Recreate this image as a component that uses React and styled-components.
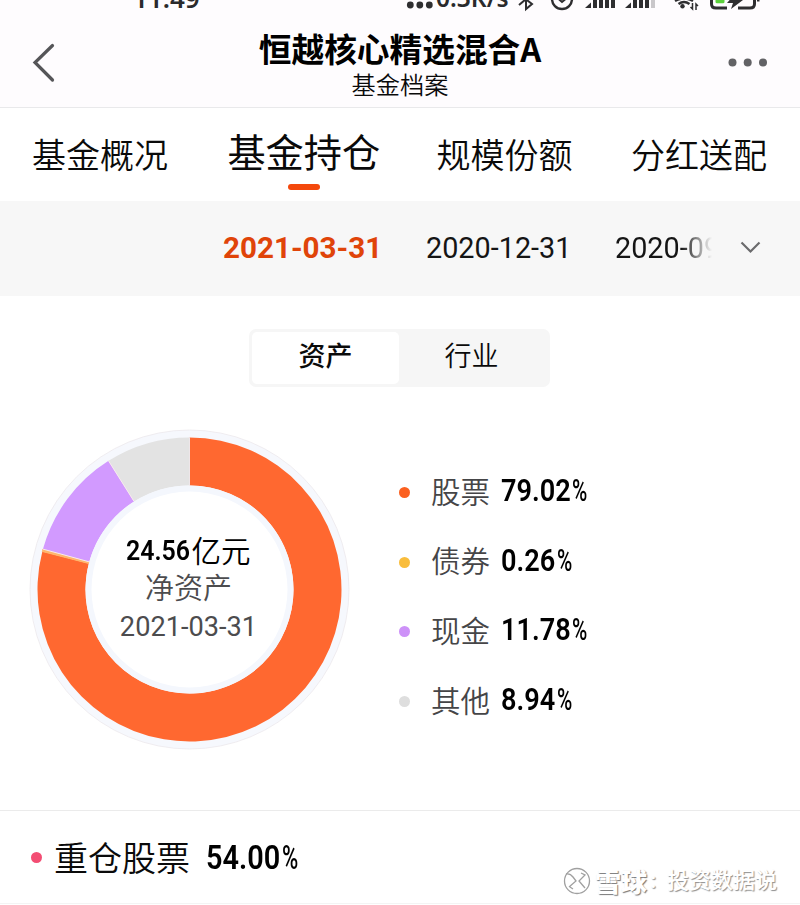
import React from "react";
import styled, { createGlobalStyle } from "styled-components";

const Global = createGlobalStyle`
  * { box-sizing: border-box; }
  body { margin: 0; background: #fff; overflow: hidden; }
`;

const Page = styled.main`
  position: relative;
  width: 800px;
  height: 905px;
  overflow: hidden;
  display: flex;
  flex-direction: column;
  background: #fff;
  color: #0a0a0a;
  font-family: Roboto, "Noto Sans CJK SC", sans-serif;
`;

const StatusBar = styled.div`
  height: 20px;
  flex: none;
  display: flex;
  overflow: hidden;
  background: #fefcfe;
  color: #2a2a2c;
`;
const StatusText = styled.span`
  display: block;
  flex: none;
  height: 30px;
  width: ${(p) => p.$width}px;
  margin-left: ${(p) => p.$left}px;
  margin-top: -17px;
  font: 600 ${(p) => p.$size}px/30px "Noto Sans", sans-serif;
  white-space: nowrap;
`;
const StatusDots = styled.svg`
  flex: none;
  width: 36px;
  height: 20px;
`;
const StatusIcons = styled.svg`
  flex: none;
  width: 250px;
  height: 20px;
`;

const Header = styled.header`
  height: 88px;
  flex: none;
  display: grid;
  grid-template-columns: 100px 1fr 100px;
  background: #fefcfe;
  border-bottom: 1px solid #e9e9eb;
`;
const HeaderIcon = styled.svg`
  width: 100px;
  height: 87px;
`;
const Titles = styled.div`
  display: flex;
  flex-direction: column;
  align-items: center;
  padding-top: 8px;
`;
const Title = styled.h1`
  margin: 0;
  font: 700 32.7px/40px "Noto Sans CJK SC", sans-serif;
  color: #000;
`;
const Subtitle = styled.div`
  font-size: 24.2px;
  line-height: 37px;
  font-weight: 350;
`;

const Tabs = styled.nav`
  height: 93px;
  flex: none;
  display: flex;
  justify-content: space-between;
  padding: 0 33px 0 32px;
`;
const Tab = styled.div`
  display: flex;
  flex-direction: column;
  align-items: center;
  font-size: ${(p) => (p.$active ? 38.2 : 34)}px;
  line-height: 56px;
  padding-top: ${(p) => (p.$active ? 18 : 20)}px;
  margin-right: ${(p) => (p.$active ? -2 : 0)}px;
  padding-left: ${(p) => (p.$active ? 1 : 0)}px;
  font-weight: ${(p) => (p.$active ? 400 : 350)};
  &::after {
    content: "";
    width: 32px;
    height: 6px;
    margin-top: 2px;
    border-radius: 3px;
    background: ${(p) => (p.$active ? "#f4480c" : "transparent")};
  }
`;

const DateBar = styled.div`
  height: 95px;
  flex: none;
  display: flex;
  align-items: center;
  padding-left: 223px;
  background: #f7f7f7;
`;
const DateItem = styled.span`
  flex: none;
  width: ${(p) => p.$width}px;
  overflow: hidden;
  white-space: nowrap;
  font-size: ${(p) => (p.$active ? 29.6 : 28.8)}px;
  font-weight: ${(p) => (p.$active ? 700 : 400)};
  line-height: 40px;
  padding-bottom: 2px;
  color: ${(p) => (p.$active ? "#e04409" : "#151515")};
  ${(p) => p.$fade && "mask-image: linear-gradient(90deg, #000 66px, transparent 97px);"}
`;
const Chevron = styled.svg`
  width: 24px;
  height: 20px;
  margin: -3px 0 0 24px;
`;

const Segmented = styled.div`
  width: 301px;
  height: 58px;
  flex: none;
  display: grid;
  grid-template-columns: 147px 1fr;
  margin: 33px 0 0 249px;
  padding: 3px;
  border-radius: 7px;
  background: #f6f6f6;
`;
const Segment = styled.div`
  border-radius: 5px;
  text-align: center;
  font-size: 27px;
  line-height: 51px;
  font-weight: ${(p) => (p.$active ? 500 : 350)};
  padding-right: ${(p) => (p.$active ? 0 : 3)}px;
  background: ${(p) => (p.$active ? "#fff" : "transparent")};
`;

const Allocation = styled.section`
  height: 424px;
  flex: none;
  display: flex;
  padding: 40px 0 0 27px;
  border-bottom: 1px solid #ebebeb;
`;
const ChartBox = styled.div`
  display: grid;
  width: 324px;
  height: 324px;
  > * { grid-area: 1 / 1; }
`;
const ChartLabel = styled.div`
  display: flex;
  flex-direction: column;
  align-items: center;
  padding-top: 105px;
  padding-right: 1px;
  color: #4c4c4e;
`;
const NetValue = styled.div`
  display: flex;
  align-items: center;
  height: 38px;
  font-size: 29.5px;
  font-weight: 350;
  color: #000;
`;
const NetUnit = styled.span`
  margin-top: -5px;
`;
const LabelLine = styled.div`
  height: 38px;
  line-height: 38px;
  font-size: ${(p) => p.$size}px;
  font-weight: ${(p) => p.$weight};
`;

const Legend = styled.ul`
  list-style: none;
  margin: 29.5px 0 0 48px;
  padding: 0;
`;
const LegendItem = styled.li`
  display: flex;
  align-items: center;
  height: 69.6px;
`;
const Dot = styled.i`
  width: 11px;
  height: 11px;
  border-radius: 50%;
  margin-top: ${(p) => p.$drop ?? 3}px;
  background: ${(p) => p.$color};
`;
const LegendName = styled.span`
  width: 69.500px;
  margin: -3px 0 0 21px;
  font-size: 29.5px;
  font-weight: 350;
  color: #454547;
`;

const Figure = styled.span`
  display: inline-flex;
  align-items: center;
  width: ${(p) => p.$width}px;
  height: 40px;
  font-weight: 600;
  font-size: ${(p) => p.$size}px;
  line-height: 40px;
  color: #000;
`;
const Digits = styled.span`
  width: ${(p) => p.$width}px;
  white-space: nowrap;
  transform: scaleX(0.875);
  transform-origin: left center;
`;
const Percent = styled.span`
  width: 14px;
  font-weight: 500;
  transform: scaleX(0.67);
  transform-origin: left center;
`;

const Holdings = styled.section`
  height: 93px;
  flex: none;
  display: flex;
  align-items: center;
  padding: 1px 0 0 31px;
  border-bottom: 1px solid #f4f4f4;
`;
const HoldingsName = styled.span`
  width: 152px;
  margin: -3px 0 0 12px;
  font-size: 34px;
  font-weight: 350;
`;

const Watermark = styled.div`
  position: absolute;
  left: 562px;
  top: 864px;
  display: flex;
  align-items: center;
  height: 34px;
  color: #fff;
  font-size: 22px;
  line-height: 30px;
  text-shadow: 1px 1px 1px #8f8f8f;
`;
const WatermarkLogo = styled.svg`
  width: 30px;
  height: 32px;
  margin-right: 3px;
`;
const Brand = styled.span`
  width: 55px;
  margin-top: -1px;
  font: 900 26px/30px "Noto Sans CJK SC", sans-serif;
  white-space: nowrap;
  text-shadow: 1px 1px 1px #777;
`;
const Colon = styled.b`
  width: 17px;
`;
const Author = styled.span`
  font-weight: 500;
`;

const slices = [
  { name: "股票", value: 79.02, text: "79.02", color: "#ff6830", dot: "#fb6020", digits: 71 },
  { name: "债券", value: 0.26, text: "0.26", color: "#ffb56b", dot: "#f9bd3c", digits: 56 },
  { name: "现金", value: 11.78, text: "11.78", color: "#d29aff", dot: "#cd91f8", digits: 71 },
  { name: "其他", value: 8.94, text: "8.94", color: "#e3e3e3", dot: "#dedede", digits: 56 },
];

function point(r, pct) {
  const a = (pct / 100) * Math.PI * 2 - Math.PI / 2;
  return `${162.5 + r * Math.cos(a)} ${162.5 + r * Math.sin(a)}`;
}

function Donut() {
  let start = 0;
  return (
    <svg width="324" height="324" viewBox="0 0 324 324">
      <circle cx="162.5" cy="162.5" r="159.5" fill="#f6f8fd" stroke="#ece9ec" strokeWidth="0.8" />
      {slices.map((s) => {
        const end = start + s.value;
        const large = s.value > 50 ? 1 : 0;
        const d = `M${point(152, start)} A152 152 0 ${large} 1 ${point(152, end)} L${point(104, end)} A104 104 0 ${large} 0 ${point(104, start)} Z`;
        const edge = start;
        start = end;
        return (
          <g key={s.name}>
            <path d={d} fill={s.color} stroke={s.value < 1 ? s.color : "none"} />
            {s.value > 1 && (
              <path d={`M${point(104, edge)} L${point(152, edge)}`} stroke="#f8e9ee" strokeWidth="1" />
            )}
          </g>
        );
      })}
      <circle cx="162.5" cy="162.5" r="104" fill="#f4f7fd" />
      <circle cx="162.5" cy="162.5" r="98" fill="#fff" />
    </svg>
  );
}

function Signal({ x, weak }) {
  return (
    <g>
      <path d={`M${x} 8 L${x + 6} 2.500 V8 Z`} />
      <path d={`M${x + 8} 0 h4 V8 h-4 Z M${x + 14} 0 h4 V8 h-4 Z M${x + 20} 0 h4 V8 h-4 Z`} />
      <path d={`M${x + 26} 0 h4 V8 h-4 Z`} fill={weak ? "#c9c7ca" : undefined} />
    </g>
  );
}

function Value({ text, digits, size = 31 }) {
  return (
    <Figure $size={size} $width={digits + 14}>
      <Digits $width={digits}>{text}</Digits>
      <Percent>%</Percent>
    </Figure>
  );
}

export default function App() {
  return (
    <Page>
      <Global />
      <StatusBar>
        <StatusText $left={133} $width={267} $size={26}>11:49</StatusText>
        <StatusDots viewBox="400 0 36 20" fill="#2e2e30">
          <circle cx="410.300" cy="5" r="3.400" />
          <circle cx="419.800" cy="5" r="3.400" />
          <circle cx="429.300" cy="5" r="3.400" />
        </StatusDots>
        <StatusText $left={0} $width={79} $size={24.5}>0.3K/s</StatusText>
        <StatusIcons viewBox="515 0 250 20" fill="#2e2e30">
          <g fill="none" stroke="#2e2e30" strokeWidth="2">
            <path d="M519 5 L532 -6 M526 -8 V9 L532 4 L519 -6" />
            <circle cx="562" cy="-1" r="10" strokeWidth="2.400" />
            <path d="M557.500 -2 L562 2 L568 -3" />
            <path d="M675 1 Q684 -4 693 1 M678.500 4 Q684 0 689.500 4" strokeWidth="2.400" />
            <path d="M692.500 3 V9 L690.500 7 M696 10 V4 L698 6" strokeWidth="1.500" />
            <path d="M711.500 -4 V4 Q711.500 8 716 8 H727 M738 8 H750 Q754.500 8 754.500 4 V-4" strokeWidth="3" />
          </g>
          <circle cx="682.500" cy="6.300" r="2.200" />
          <Signal x={585} />
          <Signal x={625} weak />
          <rect x="715.500" y="-4" width="9" height="7.200" rx="1.500" fill="#5bd13c" />
          <path d="M734 -5 L727 3 H733 L731 9 L743 0 H737 L739 -5 Z" />
          <rect x="757" y="-3" width="2.500" height="4.500" />
        </StatusIcons>
      </StatusBar>
      <Header>
        <HeaderIcon viewBox="0 0 100 87">
          <path d="M52.500 25.500 L35 42.500 L52.500 60" fill="none" stroke="#555558" strokeWidth="3.200" strokeLinecap="round" />
        </HeaderIcon>
        <Titles>
          <Title>恒越核心精选混合A</Title>
          <Subtitle>基金档案</Subtitle>
        </Titles>
        <HeaderIcon viewBox="0 0 100 87" fill="#626265">
          <circle cx="32.500" cy="42.500" r="4" />
          <circle cx="47.700" cy="42.500" r="4" />
          <circle cx="63" cy="42.500" r="4" />
        </HeaderIcon>
      </Header>
      <Tabs>
        <Tab>基金概况</Tab>
        <Tab $active>基金持仓</Tab>
        <Tab>规模份额</Tab>
        <Tab>分红送配</Tab>
      </Tabs>
      <DateBar>
        <DateItem $active $width={203}>2021-03-31</DateItem>
        <DateItem $width={189}>2020-12-31</DateItem>
        <DateItem $width={100} $fade>2020-09</DateItem>
        <Chevron viewBox="0 0 24 20">
          <path d="M2.500 5.500 L11.500 14.500 L20.500 5.500" fill="none" stroke="#6b6b6d" strokeWidth="2.200" />
        </Chevron>
      </DateBar>
      <Segmented>
        <Segment $active>资产</Segment>
        <Segment>行业</Segment>
      </Segmented>
      <Allocation>
        <ChartBox>
          <Donut />
          <ChartLabel>
            <NetValue>
              <Figure $size={28.5} $width={65}>
                <Digits $width={65}>24.56</Digits>
              </Figure>
              <NetUnit>亿元</NetUnit>
            </NetValue>
            <LabelLine $size={29} $weight={350}>净资产</LabelLine>
            <LabelLine $size={27.2} $weight={400}>2021-03-31</LabelLine>
          </ChartLabel>
        </ChartBox>
        <Legend>
          {slices.map((s) => (
            <LegendItem key={s.name}>
              <Dot $color={s.dot} />
              <LegendName>{s.name}</LegendName>
              <Value text={s.text} digits={s.digits} />
            </LegendItem>
          ))}
        </Legend>
      </Allocation>
      <Holdings>
        <Dot $color="#f34d73" $drop={0} />
        <HoldingsName>重仓股票</HoldingsName>
        <Value text="54.00" digits={76} size={33} />
      </Holdings>
      <Watermark>
        <WatermarkLogo viewBox="0 0 30 32" fill="none" stroke="#a0a0a0" strokeWidth="1.300">
          <circle cx="15" cy="16" r="12.500" />
          <path d="M4 9 Q8 8 11 12 L14 16 L7 22 M11 24 L8 22 M19 8 L23 10 L17 16 L23 23" />
        </WatermarkLogo>
        <Brand>雪球</Brand>
        <Colon>:</Colon>
        <Author>投资数据说</Author>
      </Watermark>
    </Page>
  );
}
